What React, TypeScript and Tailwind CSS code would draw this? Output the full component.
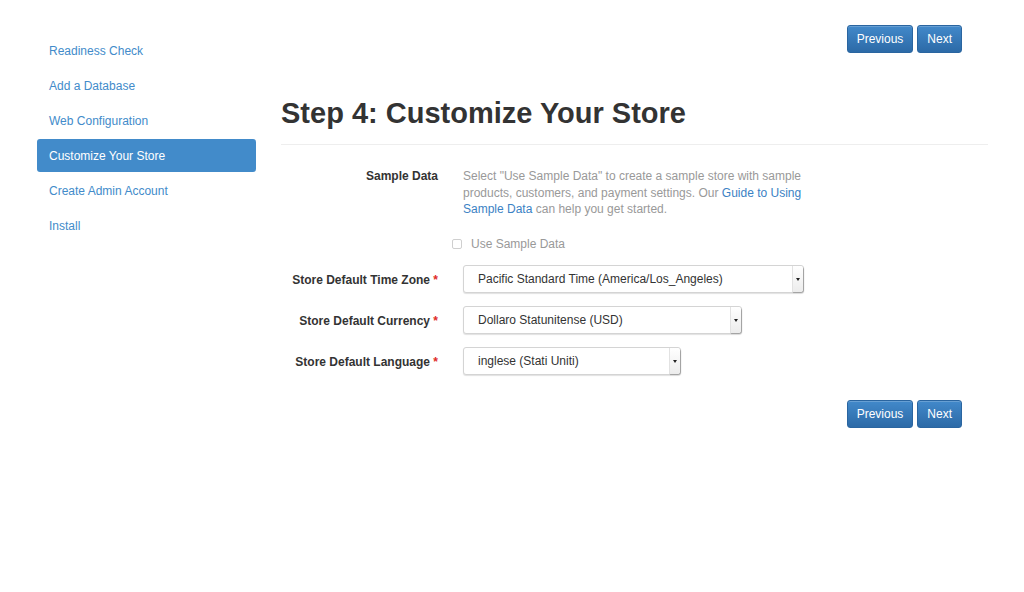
import React from 'react';

const steps = [
  'Readiness Check',
  'Add a Database',
  'Web Configuration',
  'Customize Your Store',
  'Create Admin Account',
  'Install',
];

const NavButtons: React.FC = () => (
  <div className="flex justify-end gap-[4px] pr-[26px]">
    {['Previous', 'Next'].map(label => (
      <button
        key={label}
        className="h-[28px] px-[9px] rounded-[3px] border border-[#2a65a0] bg-gradient-to-b from-[#4289ca] to-[#2c6aa7] text-[12px] text-white shadow-[inset_0_1px_0_rgba(255,255,255,0.2)]"
      >
        {label}
      </button>
    ))}
  </div>
);

const Select: React.FC<{ value: string; width: string }> = ({ value, width }) => (
  <div
    className={`${width} h-[28px] flex items-stretch rounded-[3px] border border-[#d4d4d4] bg-white shadow-[0_1px_1px_rgba(0,0,0,0.12)]`}
  >
    <div className="flex-1 flex items-center pl-[14px] text-[12px] text-[#333]">{value}</div>
    <div className="w-[11px] flex items-center justify-center border-l border-[#e2e2e2] bg-gradient-to-b from-white to-[#ececec] shadow-[1px_1px_1px_rgba(0,0,0,0.25)] rounded-r-[3px]">
      <span className="w-0 h-0 border-l-[2.5px] border-r-[2.5px] border-t-[3px] border-l-transparent border-r-transparent border-t-[#222]" />
    </div>
  </div>
);

const Field: React.FC<{ label: string; children: React.ReactNode }> = ({ label, children }) => (
  <div className="flex items-center gap-[25px]">
    <div className="w-[157px] pt-[1px] text-right text-[12px] font-bold text-[#333]">
      {label} <span className="text-[#e02b27]">*</span>
    </div>
    {children}
  </div>
);

const App: React.FC = () => {
  return (
    <div className="min-h-screen bg-white flex gap-[25px] pl-[37px] pr-[36px] font-['Liberation_Sans',Arial,sans-serif]">
      <nav className="w-[219px] pt-[34px] flex flex-col gap-[2px]">
        {steps.map((s, i) => (
          <div
            key={s}
            className={
              i === 3
                ? 'h-[33px] flex items-center px-[12px] rounded-[3px] bg-[#428bca] text-white text-[12px]'
                : 'h-[33px] flex items-center px-[12px] text-[#428bca] text-[12px]'
            }
          >
            {s}
          </div>
        ))}
      </nav>

      <main className="flex-1 pt-[25px]">
        <NavButtons />

        <h1 className="mt-[44px] text-[29px] leading-[32px] font-bold text-[#333]">
          Step 4: Customize Your Store
        </h1>
        <hr className="mt-[15px] border-t border-[#eee]" />

        <div className="mt-[23px] flex gap-[25px]">
          <div className="w-[157px] text-right text-[12px] leading-[16.5px] font-bold text-[#333]">
            Sample Data
          </div>
          <p className="w-[345px] text-[12px] leading-[16.5px] text-[#999]">
            Select "Use Sample Data" to create a sample store with sample
            <br />
            products, customers, and payment settings. Our{' '}
            <span className="text-[#3b82c4]">Guide to Using</span>
            <br />
            <span className="text-[#3b82c4]">Sample Data</span> can help you get started.
          </p>
        </div>

        <div className="mt-[18px] ml-[171px] flex items-center gap-[9px] text-[12px] leading-[16.5px] text-[#999]">
          <span className="w-[10px] h-[10px] rounded-[2px] border border-[#cfcfcf] bg-white" />
          Use Sample Data
        </div>

        <div className="mt-[13px] flex flex-col gap-[13px]">
          <Field label="Store Default Time Zone">
            <Select value="Pacific Standard Time (America/Los_Angeles)" width="w-[341px]" />
          </Field>
          <Field label="Store Default Currency">
            <Select value="Dollaro Statunitense (USD)" width="w-[279px]" />
          </Field>
          <Field label="Store Default Language">
            <Select value="inglese (Stati Uniti)" width="w-[218px]" />
          </Field>
        </div>

        <div className="mt-[25px]">
          <NavButtons />
        </div>
      </main>
    </div>
  );
};

export default App;
